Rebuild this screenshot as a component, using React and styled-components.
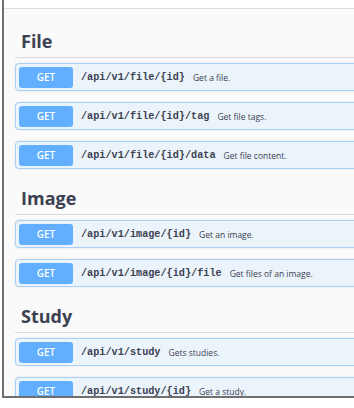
import styled, { createGlobalStyle } from "styled-components";

const GlobalStyle = createGlobalStyle`
    html, body {
        margin: 0;
        padding: 0;
        background: #ffffff;
    }
`

const sections = [
    {
        name: "File",
        ops: [
            { path: "/api/v1/file/{id}", summary: "Get a file." },
            { path: "/api/v1/file/{id}/tag", summary: "Get file tags." },
            { path: "/api/v1/file/{id}/data", summary: "Get file content." },
        ],
    },
    {
        name: "Image",
        ops: [
            { path: "/api/v1/image/{id}", summary: "Get an image." },
            { path: "/api/v1/image/{id}/file", summary: "Get files of an image." },
        ],
    },
    {
        name: "Study",
        ops: [
            { path: "/api/v1/study", summary: "Gets studies." },
            { path: "/api/v1/study/{id}", summary: "Get a study." },
        ],
    },
];

function App() {
    return (
        <>
            <GlobalStyle />
            <Window>
                <TopStrip />
                <Content>
                    {sections.map((section) => (
                        <Section key={section.name}>
                            <Heading>{section.name}</Heading>
                            {section.ops.map((op) => (
                                <OpBlock key={op.path}>
                                    <Method>GET</Method>
                                    <Path>{op.path}</Path>
                                    <Summary>{op.summary}</Summary>
                                </OpBlock>
                            ))}
                        </Section>
                    ))}
                </Content>
            </Window>
        </>
    )
}

export default App;

const Window = styled.div`
    margin-left: 2px;
    width: 350px;
    height: 396px;
    border-left: 2px solid #6f6f6f;
    border-bottom: 2px solid #6f6f6f;
    overflow: hidden;
    display: flex;
    flex-direction: column;
    background: #fafafa;
`

const TopStrip = styled.div`
    height: 8px;
    flex-shrink: 0;
    background: #ffffff;
    border-bottom: 1px solid #dcdcdc;
`

const Content = styled.div`
    padding: 14px 0 0 11px;
    font-family: "Open Sans", sans-serif;
    color: #3b4151;
`

const Section = styled.div`
    display: flex;
    flex-direction: column;
`

const Heading = styled.h3`
    margin: 0 0 5px 0;
    padding: 6px 0 4px 6px;
    font-size: 18px;
    line-height: 24px;
    font-weight: 700;
    color: #3b4151;
    border-bottom: 1px solid #dadbdd;
    width: 400px;
`

const OpBlock = styled.div`
    box-sizing: border-box;
    width: 400px;
    height: 28px;
    margin-bottom: 11px;
    padding: 0 3px;
    display: flex;
    align-items: center;
    flex-shrink: 0;
    border: 1px solid #a9d1f8;
    border-radius: 4px;
    background: #ebf3fb;
    box-shadow: 0 0 2px rgba(0, 0, 0, 0.12);
    white-space: nowrap;
`

const Method = styled.span`
    width: 54px;
    height: 21px;
    flex-shrink: 0;
    display: flex;
    align-items: center;
    justify-content: center;
    border-radius: 3px;
    background: #61affe;
    color: #ffffff;
    font-size: 10px;
    font-weight: 600;
`

const Path = styled.span`
    margin-left: 8px;
    font-family: "Liberation Mono", "DejaVu Sans Mono", monospace;
    font-size: 10.2px;
    font-weight: 700;
    color: #3b4151;
`

const Summary = styled.span`
    margin-left: 8px;
    font-size: 8.5px;
    color: #3b4151;
`
